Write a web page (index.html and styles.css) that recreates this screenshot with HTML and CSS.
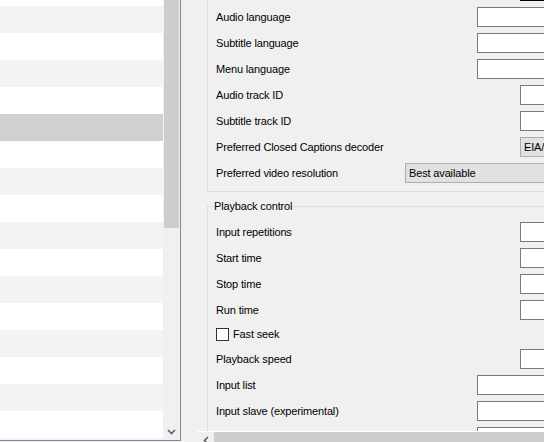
FILE: index.html
```html
<!DOCTYPE html>
<html lang="en">
<head>
<meta charset="utf-8">
<title>Preferences</title>
<link rel="stylesheet" href="styles.css">
</head>
<body>
<div class="window">
  <div class="tree">
    <div class="tree-rows">
      <div class="tree-list">
        <div class="tree-row"></div>
        <div class="tree-row alt"></div>
        <div class="tree-row"></div>
        <div class="tree-row alt"></div>
        <div class="tree-row"></div>
        <div class="tree-row sel"></div>
        <div class="tree-row"></div>
        <div class="tree-row alt"></div>
        <div class="tree-row"></div>
        <div class="tree-row alt"></div>
        <div class="tree-row"></div>
        <div class="tree-row alt"></div>
        <div class="tree-row"></div>
        <div class="tree-row alt"></div>
        <div class="tree-row"></div>
        <div class="tree-row alt"></div>
        <div class="tree-row"></div>
        <div class="tree-row alt"></div>
      </div>
    </div>
    <div class="vscroll">
      <div class="vthumb"></div>
      <div class="vtrack"></div>
      <div class="vbtn">
        <svg width="9" height="6" viewBox="0 0 9 6"><path d="M1 1 L4.5 4.5 L8 1" fill="none" stroke="#606060" stroke-width="1.6"/></svg>
      </div>
    </div>
  </div>

  <div class="prefs">
    <div class="prefs-view">
      <div class="prefs-content">
        <div class="group group-track">
          <div class="row"><span class="label"></span><span class="field narrow focused"></span></div>
          <div class="row"><span class="label">Audio language</span><span class="field wide"></span></div>
          <div class="row"><span class="label">Subtitle language</span><span class="field wide"></span></div>
          <div class="row"><span class="label">Menu language</span><span class="field wide"></span></div>
          <div class="row"><span class="label">Audio track ID</span><span class="field narrow"></span></div>
          <div class="row"><span class="label">Subtitle track ID</span><span class="field narrow"></span></div>
          <div class="row"><span class="label">Preferred Closed Captions decoder</span><span class="combo narrow">EIA/608</span></div>
          <div class="row"><span class="label">Preferred video resolution</span><span class="combo large">Best available</span></div>
        </div>

        <fieldset class="group group-playback">
          <legend>Playback control</legend>
          <div class="row"><span class="label">Input repetitions</span><span class="field narrow"></span></div>
          <div class="row"><span class="label">Start time</span><span class="field narrow"></span></div>
          <div class="row"><span class="label">Stop time</span><span class="field narrow"></span></div>
          <div class="row"><span class="label">Run time</span><span class="field narrow"></span></div>
          <div class="row check"><span class="checkbox"></span><span class="label">Fast seek</span></div>
          <div class="row"><span class="label">Playback speed</span><span class="field narrow"></span></div>
          <div class="row"><span class="label">Input list</span><span class="field wide"></span></div>
          <div class="row"><span class="label">Input slave (experimental)</span><span class="field wide"></span></div>
          <div class="row"><span class="label"></span><span class="field wide"></span></div>
        </fieldset>
      </div>
    </div>
    <div class="hscroll">
      <div class="hbtn">
        <svg width="6" height="9" viewBox="0 0 6 9"><path d="M5 1 L1.5 4.5 L5 8" fill="none" stroke="#606060" stroke-width="1.6"/></svg>
      </div>
      <div class="hthumb"></div>
    </div>
  </div>
</div>
</body>
</html>
```

FILE: styles.css
```css
html, body {
  margin: 0;
  padding: 0;
}

body {
  width: 544px;
  height: 442px;
  overflow: hidden;
  background: #f0f0f0;
  font-family: "Liberation Sans", Arial, sans-serif;
  font-size: 11px;
  letter-spacing: -0.15px;
  color: #000;
}

.window {
  display: flex;
  height: 442px;
}

/* Left category tree */
.tree {
  flex: none;
  width: 181px;
  height: 441px;
  box-sizing: border-box;
  border-right: 1px solid #828790;
  border-bottom: 1px solid #828790;
  background: #fff;
  display: flex;
}

.tree-rows {
  width: 163px;
  overflow: hidden;
}

.tree-list {
  margin-top: -21px;
}

.tree-row {
  height: 27px;
  background: #fff;
}

.tree-row.alt {
  background: #f3f3f3;
}

.tree-row.sel {
  background: #d0d0d0;
}

.vscroll {
  width: 17px;
  background: #f0f0f0;
  display: flex;
  flex-direction: column;
}

.vthumb {
  height: 228px;
  margin: 0 1px;
  background: #cdcdcd;
}

.vtrack {
  flex: 1;
}

.vbtn {
  height: 17px;
  display: flex;
  align-items: center;
  justify-content: center;
}

/* Right preferences panel */
.prefs {
  flex: 1;
  min-width: 0;
  padding-left: 16px;
  display: flex;
  flex-direction: column;
}

.prefs-view {
  height: 431px;
  flex: none;
  overflow: hidden;
}

.prefs-content {
  width: 440px;
  margin-top: -22px;
  padding-left: 10px;
}

.group {
  width: 420px;
  box-sizing: border-box;
  border: 1px solid #dcdcdc;
}

.group-track {
  border-top: none;
  padding-bottom: 5px;
}

.group-playback {
  margin: 7px 0 0 0;
  padding: 6px 0 0 0;
  min-width: 0;
}

.group-playback legend {
  margin-left: 4px;
  padding: 0 2px;
  line-height: 14px;
}

.row {
  height: 26px;
  padding: 0 10px 0 8px;
  display: flex;
  align-items: center;
  justify-content: space-between;
}

.row.check {
  height: 23px;
  justify-content: flex-start;
}

.label {
  line-height: 13px;
  white-space: nowrap;
}

.field {
  height: 20px;
  box-sizing: border-box;
  border: 1px solid #7a7a7a;
  background: #fff;
}

.field.focused {
  border-color: #000;
}

.wide {
  width: 139px;
}

.narrow {
  width: 96px;
}

.large {
  width: 211px;
}

.combo {
  height: 20px;
  box-sizing: border-box;
  border: 1px solid #adadad;
  background: #e1e1e1;
  padding-left: 3px;
  display: flex;
  align-items: center;
  white-space: nowrap;
  overflow: hidden;
}

.checkbox {
  width: 13px;
  height: 13px;
  box-sizing: border-box;
  border: 1px solid #333;
  background: #fff;
  margin-right: 4px;
}

.hscroll {
  flex: none;
  height: 17px;
  border-top: 1px solid #fff;
  background: #f0f0f0;
  display: flex;
}

.hbtn {
  width: 17px;
  display: flex;
  align-items: center;
  justify-content: center;
}

.hthumb {
  flex: 1;
  background: #cdcdcd;
}
```
